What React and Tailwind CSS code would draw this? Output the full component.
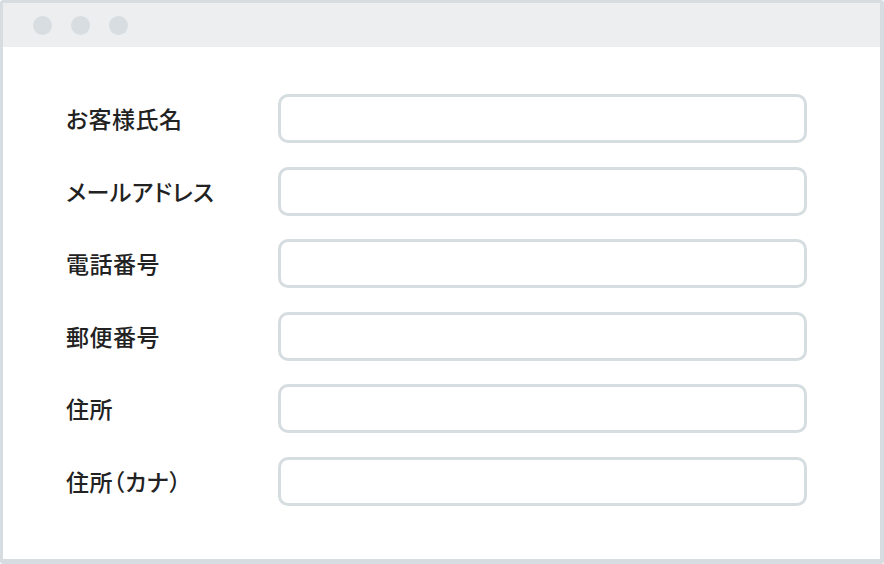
export default function App() {
  const labels = ["お客様氏名", "メールアドレス", "電話番号", "郵便番号", "住所", "住所（カナ）"];
  return (
    <div className="w-[884px] h-[564px] bg-white border-[#d6dce0] border-l-[3px] border-t-[3px] border-r-[4px] border-b-[5px] rounded-[3px] flex flex-col overflow-hidden" style={{ fontFamily: '"Noto Sans CJK JP", "Noto Sans", sans-serif' }}>
      <div className="h-[44px] bg-[#eceef0] flex items-center gap-[19px] pl-[30px] shrink-0">
        <span className="w-[19px] h-[19px] rounded-full bg-[#d8dde1]" />
        <span className="w-[19px] h-[19px] rounded-full bg-[#d8dde1]" />
        <span className="w-[19px] h-[19px] rounded-full bg-[#d8dde1]" />
      </div>
      <div className="flex flex-col gap-[23.6px] pt-[47px] pl-[63px]">
        {labels.map((l) => (
          <div key={l} className="flex items-center">
            <div className="w-[212px] text-[23px] leading-none text-[#222] font-medium tracking-[0.5px] [font-feature-settings:'palt']">{l}</div>
            <div className="w-[529px] h-[49px] border-[3px] border-[#d6dde0] rounded-[10px] bg-white" />
          </div>
        ))}
      </div>
    </div>
  );
}
